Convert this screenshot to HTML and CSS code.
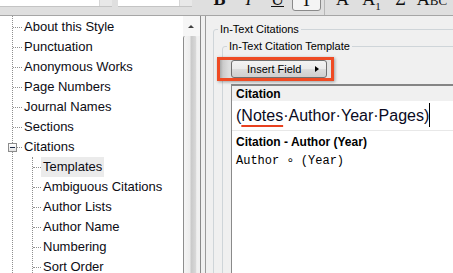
FILE: index.html
```html
<!DOCTYPE html>
<html lang="en">
<head>
  <meta charset="UTF-8">
  <title>Style Editor - Templates</title>
  <link rel="stylesheet" href="styles.css">
</head>
<body>
  <div class="window">
    <!-- Format Toolbar -->
    <div class="toolbar">
      <div class="combo font-combo"><span class="combo-text">Plain Font</span><span class="combo-btn"></span></div>
      <div class="combo size-combo"><span class="combo-text">Plain Size</span><span class="combo-btn"></span></div>
      <div class="tools">
        <span class="tool bold">B</span>
        <span class="tool italic">I</span>
        <span class="tool underline">U</span>
        <span class="tool pressed">T</span>
        <span class="tool-sep"></span>
        <span class="tool">A</span>
        <span class="tool">A<sub>1</sub></span>
        <span class="tool">&Sigma;</span>
        <span class="tool smallcaps">Abc</span>
      </div>
    </div>

    <div class="main">
      <!-- Style Tree -->
      <div class="tree-pane">
        <ul class="tree">
          <li><div class="node"><span class="twig"></span><span class="label">About this Style</span></div></li>
          <li><div class="node"><span class="twig"></span><span class="label">Punctuation</span></div></li>
          <li><div class="node"><span class="twig"></span><span class="label">Anonymous Works</span></div></li>
          <li><div class="node"><span class="twig"></span><span class="label">Page Numbers</span></div></li>
          <li><div class="node"><span class="twig"></span><span class="label">Journal Names</span></div></li>
          <li><div class="node"><span class="twig"></span><span class="label">Sections</span></div></li>
          <li>
            <div class="node"><span class="expander"></span><span class="twig short"></span><span class="label">Citations</span></div>
            <ul class="tree sub">
              <li><div class="node"><span class="twig"></span><span class="label selected">Templates</span></div></li>
              <li><div class="node"><span class="twig"></span><span class="label">Ambiguous Citations</span></div></li>
              <li><div class="node"><span class="twig"></span><span class="label">Author Lists</span></div></li>
              <li><div class="node"><span class="twig"></span><span class="label">Author Name</span></div></li>
              <li><div class="node"><span class="twig"></span><span class="label">Numbering</span></div></li>
              <li><div class="node"><span class="twig"></span><span class="label">Sort Order</span></div></li>
            </ul>
          </li>
        </ul>
      </div>
      <div class="scrollbar">
        <div class="sb-up"><span class="sb-arrow"></span></div>
        <div class="sb-thumb"></div>
      </div>
      <div class="splitter"></div>

      <!-- Template Editor -->
      <div class="editor-pane">
        <div class="group outer">
          <span class="legend">In-Text Citations</span>
          <div class="group inner">
            <span class="legend">In-Text Citation Template</span>
            <div class="field-bar">
              <button class="insert-btn">Insert Field<span class="tri"></span></button>
            </div>
            <div class="editor">
              <div class="ed-label shaded">Citation</div>
              <div class="ed-field">(<span class="misspelt">Notes</span>&middot;Author&middot;Year&middot;Pages)<span class="caret"></span></div>
              <div class="ed-label second">Citation - Author (Year)</div>
              <div class="ed-mono">Author &#8728; (Year)</div>
            </div>
          </div>
        </div>
      </div>
    </div>
  </div>
</body>
</html>
```

FILE: styles.css
```css
/* General Styles */
body {
  margin: 0;
  padding: 0;
  font-family: 'Liberation Sans', Arial, sans-serif;
  color: #000;
  background: #f0f0f0;
}

.window {
  width: 453px;
  height: 273px;
  overflow: hidden;
}

/* Toolbar */
.toolbar {
  display: flex;
  height: 15px;
  background: #dfdfdf;
  border-bottom: 1px solid #a6a6a6;
  overflow: hidden;
}

.combo {
  display: flex;
  height: 20px;
  margin-top: -14px;
  background: #fff;
  border-bottom: 1px solid #c4c4c4;
  flex: none;
}

.font-combo {
  width: 112px;
}

.size-combo {
  width: 74px;
  margin-left: 6px;
}

.combo-text {
  flex: 1;
  padding-left: 4px;
  font-size: 12px;
  line-height: 20px;
  color: #3a1010;
}

.combo-btn {
  width: 12px;
  background: #e8e8e8;
  border-left: 1px solid #d6d6d6;
}

.tools {
  display: flex;
  margin-left: 13px;
}

.tool {
  width: 29px;
  height: 23px;
  margin-top: -12px;
  text-align: center;
  font-family: 'Liberation Serif', serif;
  font-size: 18px;
  line-height: 23px;
  color: #111;
  box-sizing: border-box;
}

.tool.bold {
  font-weight: bold;
}

.tool.italic {
  font-style: italic;
}

.tool.underline {
  text-decoration: underline;
}

.tool.pressed {
  background: #f4f4f4;
  border: 1px solid #8a8a8a;
  border-radius: 0 0 3px 3px;
}

.tool sub {
  font-size: 11px;
}

.tool.smallcaps {
  width: 34px;
  font-variant: small-caps;
}

.tool-sep {
  width: 1px;
  margin: 0 3px;
  background: #b8b8b8;
}

/* Main Area */
.main {
  display: flex;
  height: 257px;
}

.tree-pane {
  width: 183px;
  background: #fff;
  overflow: hidden;
  flex: none;
}

.tree {
  list-style: none;
  margin: 0 0 0 12px;
  padding: 1px 0 0;
  border-left: 1px dotted #8f8f8f;
}

.tree.sub {
  margin-left: 19px;
  padding-top: 0;
}

.node {
  display: flex;
  align-items: center;
  height: 20px;
}

.twig {
  width: 9px;
  border-top: 1px dotted #8f8f8f;
  flex: none;
}

.twig.short {
  width: 5px;
}

.sub .twig {
  width: 8px;
}

.expander {
  position: relative;
  width: 7px;
  height: 7px;
  margin-left: -5px;
  border: 1px solid #8c8c8c;
  background: linear-gradient(#fff, #e4e4e4);
  flex: none;
}

.expander::after {
  content: "";
  position: absolute;
  left: 1px;
  top: 3px;
  width: 5px;
  height: 1px;
  background: #1c2a48;
}

.label {
  padding: 0 2px;
  font-size: 13px;
  line-height: 20px;
  white-space: nowrap;
  color: #0c0c14;
}

.label.selected {
  background: #ebebeb;
}

/* Scrollbar */
.scrollbar {
  width: 17px;
  background: #f0f0f0;
  flex: none;
}

.sb-up {
  display: flex;
  justify-content: center;
  align-items: center;
  height: 20px;
  background: #f6f6f6;
}

.sb-arrow {
  width: 0;
  height: 0;
  margin-left: -2px;
  border-left: 3px solid transparent;
  border-right: 3px solid transparent;
  border-bottom: 3px solid #404040;
}

.sb-thumb {
  width: 13px;
  height: 240px;
  border-left: 1px solid #8d8d8d;
  border-radius: 2px 2px 0 0;
  background: linear-gradient(to right, #f4f4f4 0, #ececec 45%, #c9c9c9 55%, #d8d8d8 90%, #f6f6f6 100%);
}

.splitter {
  width: 5px;
  border-left: 1px solid #8a8a8a;
  background: #f0f0f0;
  box-sizing: border-box;
  flex: none;
}

/* Editor Pane */
.editor-pane {
  flex: 1;
  padding-left: 7px;
  border-left: 1px solid #9a9a9a;
  background: #f0f0f0;
  overflow: hidden;
}

.group {
  border: 1px solid #cfd5d9;
  border-radius: 3px;
  padding-left: 8px;
  margin-right: -30px;
  height: 300px;
}

.group.outer {
  margin-top: 13px;
}

.group.inner {
  margin-top: 10px;
}

.legend {
  display: block;
  width: max-content;
  margin: -7px 0 0 -4px;
  padding: 0 2px;
  font-size: 11px;
  line-height: 13px;
  background: #f0f0f0;
}

.field-bar {
  display: flex;
  width: max-content;
  margin: 4px 0 0 -14px;
  padding: 0 4px 0 11px;
  border: 3px solid #ef4b24;
  background: linear-gradient(to right, #a9a9a9 0, #cbcbcb 3px, #dedede 9px, #e4e4e4 100%);
  box-shadow: 1px 1px 3px rgba(0, 0, 0, 0.35);
}

.insert-btn {
  display: flex;
  align-items: center;
  width: 96px;
  height: 18px;
  padding: 0 0 0 15px;
  border: 1px solid #707070;
  border-radius: 3px;
  background: linear-gradient(#f3f3f3, #ebebeb 50%, #dddddd 50%, #cfcfcf);
  font-family: 'Liberation Sans', Arial, sans-serif;
  font-size: 11px;
  color: #000;
}

.tri {
  width: 0;
  height: 0;
  margin: 0 7px 0 auto;
  border-top: 3px solid transparent;
  border-bottom: 3px solid transparent;
  border-left: 4px solid #000;
}

.editor {
  margin-top: 3px;
  height: 200px;
  border-top: 2px solid #858585;
  border-left: 1px solid #8a8a8a;
  background: #fff;
}

.ed-label {
  padding: 1px 0 0 4px;
  font-size: 12px;
  font-weight: bold;
  line-height: 14px;
}

.ed-label.shaded {
  background: #f0f0f0;
}

.ed-label.second {
  margin-top: 3px;
}

.ed-field {
  padding-left: 4px;
  font-size: 16px;
  line-height: 29px;
  color: #0a0a1e;
  border-bottom: 1px solid #e8e8e8;
  white-space: nowrap;
}

.misspelt {
  text-decoration: underline #e8401f 2px;
  text-underline-offset: 4px;
}

.caret {
  display: inline-block;
  width: 1px;
  height: 24px;
  vertical-align: -6px;
  background: #000;
}

.ed-mono {
  margin-top: 4px;
  padding-left: 4px;
  font-family: 'Liberation Mono', 'DejaVu Sans Mono', monospace;
  font-size: 12px;
  line-height: 16px;
}
```
